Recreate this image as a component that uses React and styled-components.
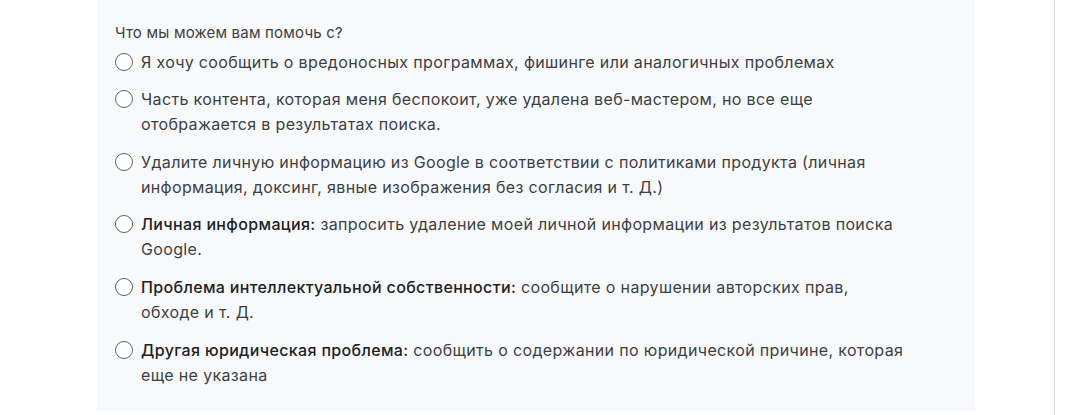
import React from 'react';
import styled, { createGlobalStyle } from 'styled-components';

const Global = createGlobalStyle`
  html, body {
    margin: 0;
    padding: 0;
    background: #fff;
  }
  body {
    font-family: Inter, Roboto, "Noto Sans", sans-serif;
  }
`;

const Page = styled.div`
  display: flex;
  width: 1077px;
  height: 415px;
  overflow: hidden;
`;

const Main = styled.div`
  width: 1055px;
  border-right: 1px solid #dadce0;
  padding-left: 97px;
  box-sizing: border-box;
`;

const Panel = styled.fieldset`
  margin: 0;
  border: none;
  width: 878px;
  box-sizing: border-box;
  background: #f8f9fa;
  padding: 21px 40px 23px 18px;
  display: flex;
  flex-direction: column;
  gap: 12.6px;
`;

const Legend = styled.div`
  font-size: 15px;
  line-height: 24px;
  letter-spacing: 0.2px;
  color: #3c4043;
  margin-bottom: -8px;
`;

const Option = styled.label`
  display: flex;
  align-items: flex-start;
  gap: 8px;
  cursor: pointer;
`;

const Circle = styled.span`
  flex: none;
  width: 16px;
  height: 16px;
  margin-top: 3px;
  border: 1.5px solid #5f6368;
  border-radius: 50%;
  background: #fff;
`;

const Text = styled.span`
  font-size: 16px;
  line-height: 25px;
  letter-spacing: 0.35px;
  color: #3c4043;
  max-width: 765px;
`;

const Strong = styled.b`
  font-weight: 500;
  color: #202124;
`;

const options = [
  { text: 'Я хочу сообщить о вредоносных программах, фишинге или аналогичных проблемах' },
  { text: 'Часть контента, которая меня беспокоит, уже удалена веб-мастером, но все еще отображается в результатах поиска.' },
  { text: 'Удалите личную информацию из Google в соответствии с политиками продукта (личная информация, доксинг, явные изображения без согласия и т. Д.)' },
  { title: 'Личная информация:', text: ' запросить удаление моей личной информации из результатов поиска Google.' },
  { title: 'Проблема интеллектуальной собственности:', text: ' сообщите о нарушении авторских прав, обходе и т. Д.' },
  { title: 'Другая юридическая проблема:', text: ' сообщить о содержании по юридической причине, которая еще не указана' },
];

export default function App() {
  return (
    <>
      <Global />
      <Page>
        <Main>
          <Panel>
            <Legend>Что мы можем вам помочь с?</Legend>
            {options.map((o, i) => (
              <Option key={i}>
                <Circle />
                <Text>
                  {o.title && <Strong>{o.title}</Strong>}
                  {o.text}
                </Text>
              </Option>
            ))}
          </Panel>
        </Main>
      </Page>
    </>
  );
}
